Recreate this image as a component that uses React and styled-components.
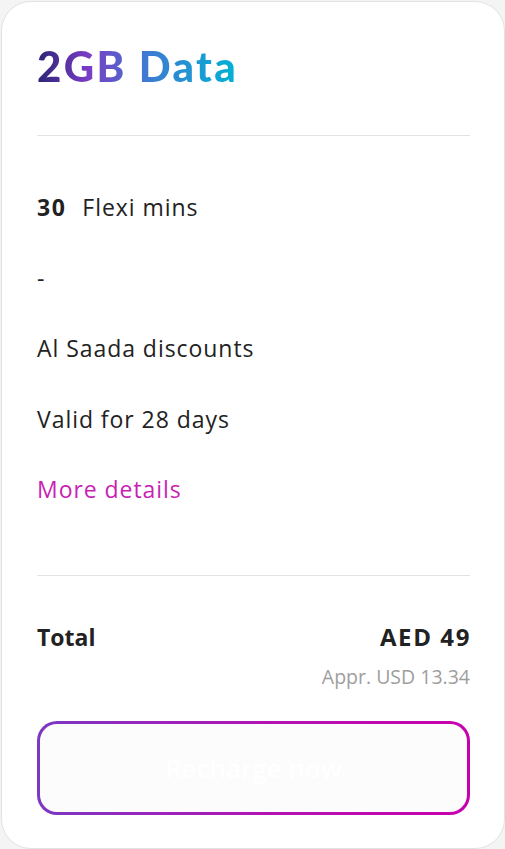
import React from 'react';
import styled, { createGlobalStyle } from 'styled-components';

const GlobalStyle = createGlobalStyle`
  html, body {
    margin: 0;
    padding: 0;
    background: #f4f4f4;
  }
  body {
    font-family: 'Open Sans', 'Liberation Sans', sans-serif;
    color: #222;
  }
`;

const Card = styled.div`
  box-sizing: border-box;
  margin: 1px 0 0 1px;
  height: 848px;
  background: #fff;
  border: 1px solid #e2e2e2;
  border-radius: 30px;
  padding: 0 34px 0 35px;
  display: flex;
  flex-direction: column;
`;

const Title = styled.h2`
  margin: 41px 0 0;
  font-family: 'Lato', sans-serif;
  font-weight: 900;
  font-size: 42px;
  line-height: 46px;
  letter-spacing: 2.3px;
  background: linear-gradient(90deg, #2b2476 0%, #7a3cc4 25%, #3d7bd2 55%, #00b2d4 100%);
  -webkit-background-clip: text;
  background-clip: text;
  color: transparent;
  align-self: flex-start;
`;

const Divider = styled.hr`
  border: none;
  border-top: 1px solid #e3e3e3;
  margin: ${p => p.$top}px 0 0;
`;

const Features = styled.ul`
  list-style: none;
  margin: 36px 0 0;
  padding: 0;
`;

const Feature = styled.li`
  height: 70.5px;
  display: flex;
  align-items: center;
  font-size: 23px;
  letter-spacing: 0.95px;
  color: ${p => (p.$link ? '#c81fb4' : '#222')};
  cursor: ${p => (p.$link ? 'pointer' : 'default')};
`;

const Amount = styled.b`
  font-weight: 700;
  letter-spacing: 1.5px;
  margin-right: 16px;
`;

const TotalRow = styled.div`
  margin-top: 47px;
  display: flex;
  justify-content: space-between;
  align-items: center;
  font-weight: 700;
  font-size: 23px;
  line-height: 28px;
`;

const Price = styled.span`
  font-size: 24px;
  letter-spacing: 1.6px;
  margin-right: -1px;
`;

const Converted = styled.div`
  margin-top: 14px;
  text-align: right;
  color: #9e9e9e;
  font-size: 19.5px;
  line-height: 24px;
`;

const RechargeButton = styled.button`
  margin-top: 32px;
  height: 94px;
  width: 100%;
  box-sizing: border-box;
  border: 3px solid transparent;
  border-radius: 20px;
  background:
    linear-gradient(#fcfcfc, #fcfcfc) padding-box,
    linear-gradient(90deg, #7b38c2 0%, #b114b6 50%, #c800ad 100%) border-box;
  color: #fff;
  font-family: 'Open Sans', sans-serif;
  font-weight: 600;
  font-size: 26px;
  cursor: pointer;
`;

export default function App() {
  return (
    <>
      <GlobalStyle />
      <Card>
        <Title>2GB Data</Title>
        <Divider $top={46} />
        <Features>
          <Feature>
            <Amount>30</Amount>Flexi mins
          </Feature>
          <Feature>-</Feature>
          <Feature>Al Saada discounts</Feature>
          <Feature>Valid for 28 days</Feature>
          <Feature $link>More details</Feature>
        </Features>
        <Divider $top={50} />
        <TotalRow>
          <span>Total</span>
          <Price>AED 49</Price>
        </TotalRow>
        <Converted>Appr. USD 13.34</Converted>
        <RechargeButton>Recharge now</RechargeButton>
      </Card>
    </>
  );
}
